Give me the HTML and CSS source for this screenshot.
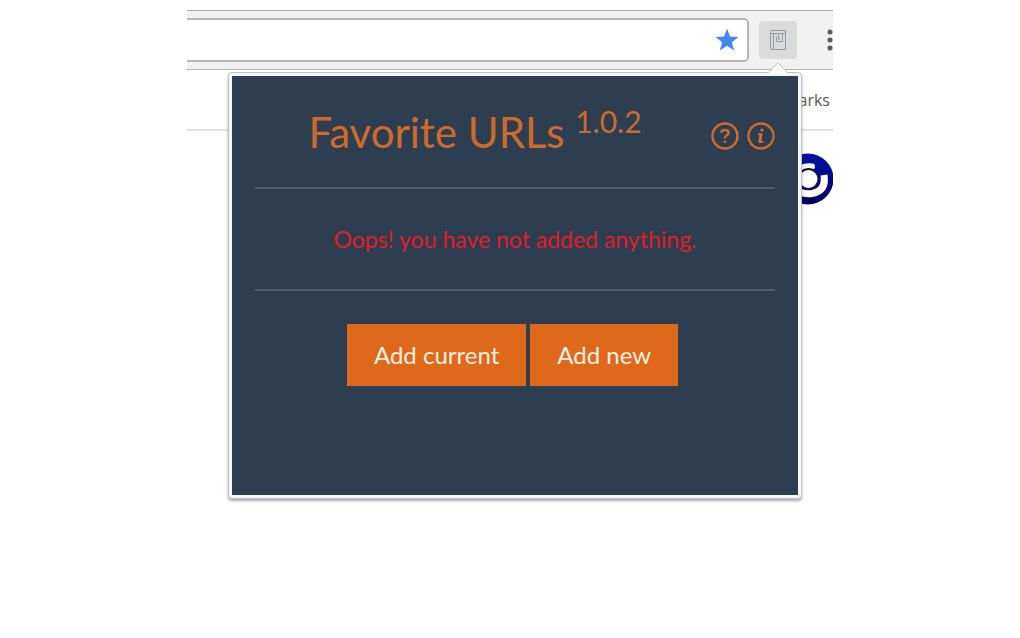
FILE: index.html
```html
<!DOCTYPE html>
<html lang="en">
<head>
<meta charset="utf-8">
<title>Favorite URLs</title>
<link rel="stylesheet" href="styles.css">
</head>
<body>
<div class="browser">
  <header class="toolbar">
    <input class="address" type="text" aria-label="Address">
    <button class="star" type="button" aria-label="Bookmark this page">
      <svg width="24" height="24" viewBox="0 0 24 24"><path fill="#4285f4" d="M12 .5l3 8.100 8.500.3-6.700 5.300 2.400 8.300-7.200-4.800-7.200 4.800 2.400-8.300L.5 8.900 9 8.600z"/></svg>
    </button>
    <button class="extension" type="button" aria-label="Favorite URLs extension">
      <svg width="18" height="22" viewBox="0 0 18 22" fill="none" stroke="#909da5"><path d="M1.500 2.500Q1.500 1.500 3 1.500H16.500V20.500H3Q1.500 20.500 1.500 19zM1.500 4.500H16.500M4.500 4.500V20.500M7.500 7.500V12.500H13.500V5M9.500 5V10.500L11.500 9.500"/></svg>
    </button>
    <button class="menu" type="button" aria-label="Menu">
      <svg width="6" height="22" viewBox="0 0 6 22" fill="#5a5a5a"><circle cx="3" cy="3" r="2.500"/><circle cx="3" cy="11" r="2.500"/><circle cx="3" cy="19" r="2.500"/></svg>
    </button>
  </header>
  <div class="bookmarks"><span>arks</span></div>
  <main class="page">
    <svg class="logo" width="52" height="52" viewBox="0 0 52 52">
      <defs><linearGradient id="blue" x1="0" y1="0" x2="0" y2="1"><stop offset="0" stop-color="#0012a8"/><stop offset="1" stop-color="#000058"/></linearGradient></defs>
      <circle cx="27" cy="26" r="25.500" fill="url(#blue)"/>
      <path d="M43 22Q45.500 38 31 40.500Q20 42 14 35" fill="none" stroke="#fff" stroke-width="7"/>
      <path d="M15 19Q20 12.500 31 13.500" fill="none" stroke="#fff" stroke-width="6" stroke-linecap="round"/>
      <circle cx="27.500" cy="26" r="10" fill="#fff" stroke="#10105c" stroke-width="2"/>
    </svg>
  </main>
  <section class="popup">
    <svg class="arrow" width="20" height="12" viewBox="0 0 20 12"><path d="M0 11L10 1L20 11V12H0z" fill="#fff"/><path d="M0 11L10 1L20 11" fill="none" stroke="#c4c4c8"/></svg>
    <div class="panel">
      <div class="heading">
        <h1>Favorite URLs <sup>1.0.2</sup></h1>
        <div class="actions">
          <button type="button" aria-label="Help"><svg width="28" height="28" viewBox="0 0 28 28" fill="none" stroke="currentColor"><circle cx="14" cy="14" r="12.500" stroke-width="2.400"/><path d="M10 10.500Q11 8 14 8Q17.500 8 17.500 11Q17.500 12.500 15.500 13.500Q14 14.300 14 16.500M14 18.500V21" stroke-width="2.400"/></svg></button>
          <button type="button" aria-label="Information"><svg width="28" height="28" viewBox="0 0 28 28" fill="none" stroke="currentColor"><circle cx="14" cy="14" r="12.500" stroke-width="2.400"/><path d="M11 12.300H14.300L12.800 20H16" stroke-width="2"/><path d="M14.100 12L12.600 20.500M15.200 6.800L14.700 9.600" stroke-width="2.800"/></svg></button>
        </div>
      </div>
      <p class="message">Oops! you have not added anything.</p>
      <div class="buttons">
        <button type="button">Add current</button>
        <button type="button">Add new</button>
      </div>
    </div>
  </section>
</div>
</body>
</html>
```
FILE: styles.css
```css
* { box-sizing: border-box; }

body {
  min-height: 100vh;
  margin: 0;
  padding: 10px 0;
  background: #fff;
  font-family: Lato, sans-serif;
}

button {
  border: 0;
  padding: 0;
  background: none;
  font: inherit;
  color: inherit;
}

svg { display: block; }

.browser {
  position: relative;
  max-width: 646px;
  margin: 0 auto;
}

.toolbar {
  display: flex;
  align-items: center;
  height: 60px;
  overflow: hidden;
  background: #f1f1f2;
  border-top: 1px solid #b0b0b0;
  border-bottom: 1px solid #b5b5b7;
}

.address {
  flex: 1;
  min-width: 0;
  height: 44px;
  padding: 0 40px 0 12px;
  border: 2px solid #b5b5b7;
  border-left: 0;
  border-radius: 0 5px 5px 0;
  background: #fff;
  font-size: 18px;
}

.star { margin-left: -34px; }

.extension {
  display: grid;
  place-items: center;
  width: 38px;
  height: 38px;
  margin-left: 20px;
  border-radius: 4px;
  background: #dadada;
}

.menu {
  width: 6px;
  margin-left: 30px;
}

.bookmarks {
  display: flex;
  justify-content: flex-end;
  align-items: center;
  height: 61px;
  padding-right: 3px;
  border-bottom: 2px solid #e3e3e3;
  font-family: "Open Sans", sans-serif;
  font-size: 16px;
  color: #555;
}

.page {
  display: flex;
  justify-content: flex-end;
  padding-top: 22px;
}

.popup {
  position: absolute;
  top: 62px;
  left: 41px;
  right: 31px;
  padding: 3px;
  border: 1px solid #c4c4c8;
  border-radius: 4px;
  background: #f4f8fb;
  box-shadow: 0 2px 3px #00000055;
}

.arrow {
  position: absolute;
  top: -11px;
  right: 13px;
}

.panel {
  min-height: 419px;
  padding: 24px 23px;
  background: #2c3e50;
}

.heading {
  display: flex;
  height: 89px;
  border-bottom: 2px solid #4b6073;
  color: #cf6a2d;
}

.heading h1 {
  flex: 1;
  margin: 0;
  font-size: 42px;
  font-weight: 400;
  line-height: 64px;
  text-align: center;
  white-space: nowrap;
}

.heading sup {
  font-size: 30px;
  line-height: 0;
}

.actions {
  display: flex;
  gap: 8px;
  margin: 22px 0 0 16px;
  align-self: flex-start;
}

.message {
  margin: 0;
  padding: 34px 0;
  border-bottom: 2px solid #4b6073;
  font-size: 23px;
  line-height: 32px;
  text-align: center;
  color: #e01c28;
}

.buttons {
  display: flex;
  justify-content: center;
  gap: 4px;
  padding: 33px 5px 0 0;
}

.buttons button {
  padding: 15px 27px;
  background: #de691b;
  color: #fff0e2;
  font-size: 24px;
  line-height: 32px;
}
```
